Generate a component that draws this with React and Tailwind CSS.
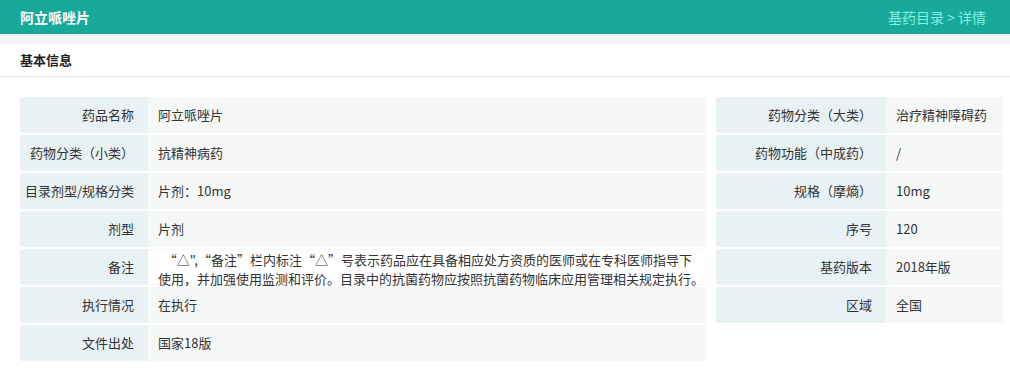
import React from 'react';

const leftRows = [
    ['药品名称', '阿立哌唑片'],
    ['药物分类（小类）', '抗精神病药'],
    ['目录剂型/规格分类', '片剂：10mg'],
    ['剂型', '片剂'],
    ['备注', null],
    ['执行情况', '在执行'],
    ['文件出处', '国家18版'],
];

const rightRows = [
    ['药物分类（大类）', '治疗精神障碍药'],
    ['药物功能（中成药）', '/'],
    ['规格（摩熵）', '10mg'],
    ['序号', '120'],
    ['基药版本', '2018年版'],
    ['区域', '全国'],
];

function Row({ label, value, labelWidth }) {
    return (
        <div className="flex h-[36px]">
            <div
                className={`${labelWidth} shrink-0 flex items-center justify-end pr-[14px] bg-[#e8f1f3] rounded-l-[3px]`}
            >
                {label}
            </div>
            {value === null ? (
                <div className="flex-1 bg-[#f6f8f8] py-[1px]">
                    <div className="bg-white h-full pl-[10px] leading-[19px]">
                        <div>&nbsp;&nbsp;“△",“备注”栏内标注“△”号表示药品应在具备相应处方资质的医师或在专科医师指导下</div>
                        <div>使用，并加强使用监测和评价。目录中的抗菌药物应按照抗菌药物临床应用管理相关规定执行。</div>
                    </div>
                </div>
            ) : (
                <div className="flex-1 flex items-center pl-[10px] bg-[#f6f8f8]">{value}</div>
            )}
        </div>
    );
}

export default function App() {
    return (
        <div
            className="w-[1010px] h-[372px] bg-white text-[13px] text-[#333]"
            style={{ fontFamily: '"Noto Sans CJK SC", "Noto Sans", sans-serif' }}
        >
            <div className="h-[34px] bg-[#17a99a] flex items-center justify-between pl-[20px] pr-[24px]">
                <span className="text-white font-bold text-[14px]">阿立哌唑片</span>
                <span className="text-[#86f2df] text-[14px]">基药目录 &gt; 详情</span>
            </div>
            <div className="h-[10px] bg-[#f3f4f6]" />
            <div className="h-[33px] border-b border-[#e5e7eb] flex items-center pl-[20px]">
                <span className="font-bold text-[13px] text-[#222]">基本信息</span>
            </div>
            <div className="flex gap-[10px] pl-[20px] pr-[7px] pt-[20px]">
                <div className="w-[686px] flex flex-col gap-[2px]">
                    {leftRows.map(([l, v]) => (
                        <Row key={l} label={l} value={v} labelWidth="w-[128px]" />
                    ))}
                </div>
                <div className="flex-1 flex flex-col gap-[2px]">
                    {rightRows.map(([l, v]) => (
                        <Row key={l} label={l} value={v} labelWidth="w-[170px]" />
                    ))}
                </div>
            </div>
        </div>
    );
}
